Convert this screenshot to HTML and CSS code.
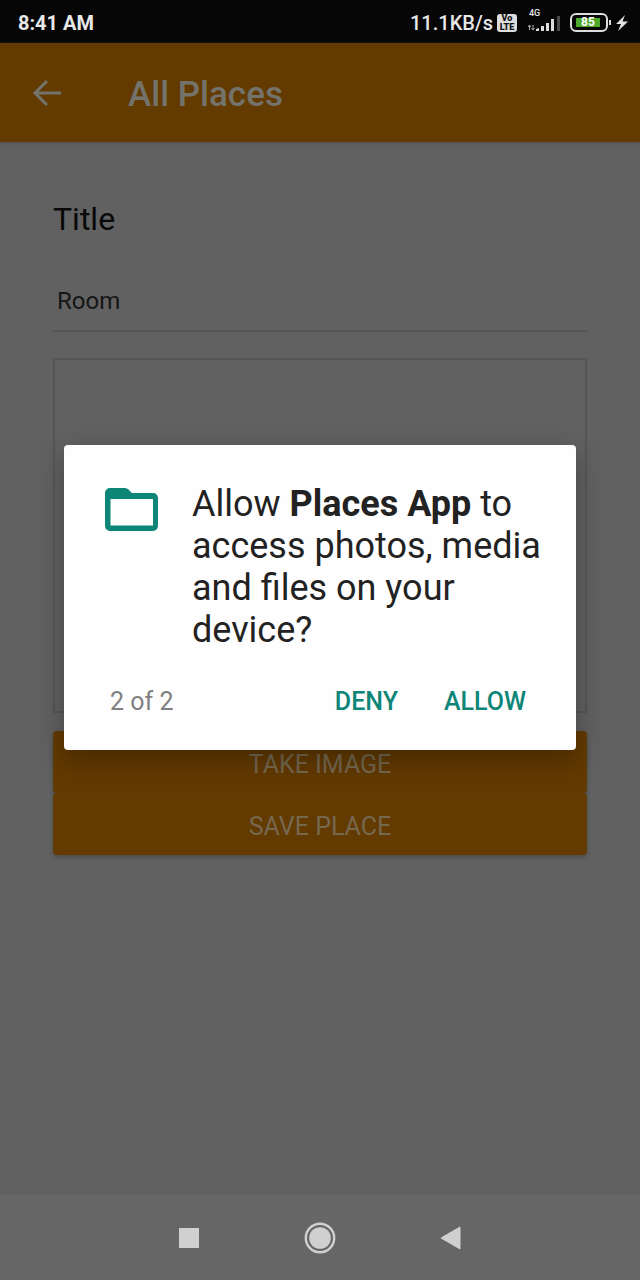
FILE: index.html
```html
<!DOCTYPE html>
<html lang="en">
<head>
<meta charset="utf-8">
<meta name="viewport" content="width=device-width, initial-scale=1">
<title>All Places</title>
<link rel="stylesheet" href="styles.css">
</head>
<body>
<div class="screen">
  <div class="statusbar">
    <span class="clock">8:41 AM</span>
    <div class="status">
      <span>11.1KB/s</span>
      <span class="volte"><span>Vo</span><span>LTE</span></span>
      <span class="signal">
        <span class="network">4G</span>
        <svg width="34" height="16" viewBox="0 0 34 16" aria-hidden="true">
          <path d="M2.500 14V9M1 11l1.500-2L4 11M6 9v5M4.500 12l1.500 2L7.500 12" fill="none" stroke="#aaa" stroke-width="1"/>
          <path d="M9 15v-2l3-1v3zM14 15v-5h3v5zM19 15V7h3v8zM24 15V3h3v12z" fill="#dcdcdc"/>
          <path d="M30 15V0h3v15z" fill="#4b4b4b"/>
        </svg>
      </span>
      <span class="battery"><span class="level">85</span></span>
      <svg class="bolt" width="12" height="18" viewBox="0 0 12 18" aria-hidden="true"><path d="M9 1 0 10h5l-3 7L12 7.500H6.500z" fill="#e4e4e4"/></svg>
    </div>
  </div>
  <header class="appbar">
    <button class="back" aria-label="Back">
      <svg width="30" height="28" viewBox="0 0 30 28" aria-hidden="true"><path d="M29 14H3M15 2 3 14l12 12" fill="none" stroke="currentColor" stroke-width="3"/></svg>
    </button>
    <h1 class="heading">All Places</h1>
  </header>
  <main class="form">
    <label class="label" for="title">Title</label>
    <input class="field" id="title" type="text" value="Room">
    <div class="preview"></div>
    <button class="action">TAKE IMAGE</button>
    <button class="action">SAVE PLACE</button>
  </main>
  <nav class="navbar">
    <button aria-label="Recent apps"><svg width="32" height="32" viewBox="0 0 32 32"><path d="M6 6h20v20H6z" fill="currentColor"/></svg></button>
    <button aria-label="Home"><svg width="32" height="32" viewBox="0 0 32 32"><circle cx="16" cy="16" r="14.200" fill="none" stroke="currentColor" stroke-width="2.400"/><circle cx="16" cy="16" r="10.800" fill="currentColor"/></svg></button>
    <button aria-label="Back"><svg width="32" height="32" viewBox="0 0 32 32"><path d="M25 5v22L6 16z" fill="currentColor" stroke="currentColor" stroke-linejoin="round"/></svg></button>
  </nav>
  <div class="overlay">
    <section class="dialog" role="dialog" aria-labelledby="question">
      <div class="request">
        <svg class="folder" width="54" height="44" viewBox="0 0 54 44" aria-hidden="true"><path fill-rule="evenodd" d="M5 0h15q2 0 3.500 1.500L27 5h21a5 5 0 0 1 5 5v28a5 5 0 0 1-5 5H5a5 5 0 0 1-5-5V5a5 5 0 0 1 5-5zM5.500 11v26.500h42.500V11z" fill="#0d8577"/></svg>
        <p class="question" id="question">Allow <b>Places App</b> to access photos, media and files on your device?</p>
      </div>
      <div class="choices">
        <span class="count">2 of 2</span>
        <button class="choice">DENY</button>
        <button class="choice">ALLOW</button>
      </div>
    </section>
  </div>
</div>
</body>
</html>
```
FILE: styles.css
```css
* { box-sizing: border-box; }
body { margin: 0; font-family: Roboto, "Liberation Sans", sans-serif; background: #616161; }
button { border: 0; padding: 0; background: none; font: inherit; color: inherit; cursor: pointer; }
svg { display: block; }

.screen { position: relative; display: flex; flex-direction: column; min-height: 100vh; }

.statusbar { display: flex; justify-content: space-between; align-items: center; height: 43px; padding: 2px 12px 0 18px; background: #060606; color: #e8e8e8; font-size: 20px; font-weight: 700; }
.status { display: flex; align-items: center; gap: 4px; font-weight: 500; }
.volte { display: flex; flex-direction: column; align-items: center; width: 20px; height: 18px; border-radius: 3px; background: #ddd; color: #111; font-size: 9px; line-height: 9px; font-weight: 900; }
.signal { display: flex; flex-direction: column; width: 34px; margin-left: 6px; padding-bottom: 2px; }
.network { height: 5px; padding-left: 2px; font-size: 9px; line-height: 5px; }
.battery { position: relative; width: 38px; height: 19px; margin-left: 5px; padding: 3px 4px; border: 2px solid #ddd; border-radius: 6px; }
.battery::after { content: ""; position: absolute; right: -5px; top: 5px; width: 2px; height: 5px; background: #ddd; }
.level { display: block; width: 24px; background: #4da82c; color: #fff; font-size: 12px; line-height: 9px; font-weight: 700; text-align: center; }
.bolt { margin-left: 4px; }

.appbar { display: flex; align-items: center; gap: 66px; height: 99px; padding: 0 32px; background: #633a00; color: #73736b; box-shadow: 0 1px 3px #4d4d4d; }
.heading { margin: 4px 0 0; font-size: 35px; line-height: 42px; font-weight: 500; }

.form { flex: 1; display: flex; flex-direction: column; padding: 56px 53px; }
.label { color: #080808; font-size: 32px; line-height: 42px; }
.field { width: 100%; height: 64px; margin: 28px 0 26px; padding: 4px 4px 0; border: 0; border-bottom: 2px solid #575757; border-radius: 0; outline: 0; background: none; color: #161616; font: 24px/32px Roboto, "Liberation Sans", sans-serif; }
.preview { height: 355px; margin-bottom: 18px; border: 2px solid #555; }
.action { height: 62px; padding-top: 4px; border-radius: 4px; background: #633a00; color: #76684f; font-size: 25px; box-shadow: 0 2px 4px #4a4a4a; }

.navbar { display: flex; justify-content: center; gap: 99px; height: 85px; background: #666; color: #d0d0d0; }

.overlay { position: absolute; inset: 0 0 85px; display: flex; align-items: center; padding: 0 64px; }
.dialog { width: 100%; border-radius: 4px; background: #fefefe; box-shadow: 0 10px 28px rgba(0, 0, 0, .3); }
.request { display: flex; align-items: flex-start; gap: 33px; padding: 38px 32px 0 41px; }
.folder { flex: none; margin-top: 5px; }
.question { margin: 0; color: #222; font-size: 36px; line-height: 42px; }
.choices { display: flex; align-items: center; height: 99px; padding: 2px 50px 0 46px; gap: 46px; color: #0d8577; font-size: 25px; font-weight: 500; }
.count { flex: 1; color: #808080; font-weight: 400; }
```
